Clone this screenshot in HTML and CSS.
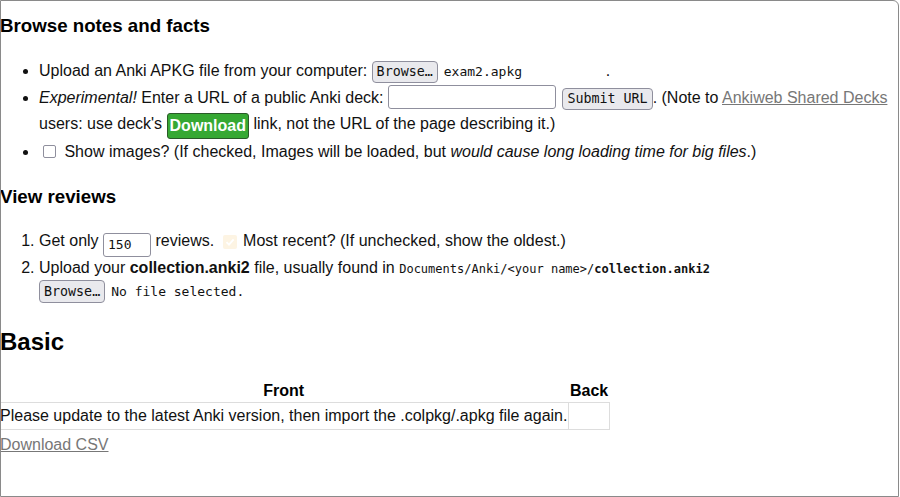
FILE: index.html
```html
<!DOCTYPE html>
<html>
<head>
<meta charset="utf-8">
<link rel="stylesheet" href="styles.css">
</head>
<body>
<div class="frame">
  <div class="content">
    <h3 class="h-browse">Browse notes and facts</h3>
    <ul class="list">
      <li>Upload an Anki APKG file from your computer: <span class="file"><span class="btn">Browse…</span><span class="fname">exam2.apkg</span></span>.</li>
      <li><em>Experimental!</em> Enter a URL of a public Anki deck: <span class="text-input"></span> <span class="btn">Submit URL</span>. (Note to <a class="link" href="#">Ankiweb Shared Decks</a> users: use deck's <span class="dl">Download</span> link, not the URL of the page describing it.)</li>
      <li><span class="cb"></span> Show images? (If checked, Images will be loaded, but <em>would cause long loading time for big files</em>.)</li>
    </ul>
    <h3 class="h-reviews">View reviews</h3>
    <ol class="list olist">
      <li>Get only <span class="num-input">150</span> reviews. <span class="cb-checked"><svg width="10" height="10" viewBox="0 0 10 10"><path d="M1.5 5.2 L4 7.6 L8.6 2.4" fill="none" stroke="#fff" stroke-width="1.8"/></svg></span> Most recent? (If unchecked, show the oldest.)</li>
      <li>Upload your <b>collection.anki2</b> file, usually found in <code>Documents/Anki/&lt;your name&gt;/<b>collection.anki2</b></code><br><span class="file"><span class="btn btn-tall">Browse…</span><span class="fname2">No file selected.</span></span></li>
    </ol>
    <h2 class="h-basic">Basic</h2>
    <table class="cards">
      <thead>
        <tr><th>Front</th><th>Back</th></tr>
      </thead>
      <tbody>
        <tr><td>Please update to the latest Anki version, then import the .colpkg/.apkg file again.</td><td></td></tr>
      </tbody>
    </table>
    <a class="link csv" href="#">Download CSV</a>
  </div>
</div>
</body>
</html>
```
FILE: styles.css
```css
html, body {
  margin: 0;
  padding: 0;
  background: #fff;
}
.frame {
  box-sizing: border-box;
  width: 899px;
  height: 497px;
  border: 1px solid #8a8a8a;
  border-top-right-radius: 6px;
  overflow: hidden;
  font-family: "Liberation Sans", Arial, sans-serif;
  font-size: 16px;
  color: #111;
  line-height: 1.5;
}
.content {
  margin-left: -1px;
}
h3 {
  font-size: 18.72px;
  font-weight: bold;
  color: #000;
  margin: 0;
}
.h-browse { margin-top: 11px; }
.h-reviews { margin-top: 18px; }
h2 {
  font-size: 24px;
  font-weight: bold;
  color: #000;
  margin: 21px 0 0 0;
}
.list {
  margin: 18px 0 0 0;
  padding-left: 39px;
}
.list li {
  line-height: 26px;
}
.olist {
  margin-top: 19px;
}
.olist li {
  line-height: 22px;
}
.btn {
  display: inline-block;
  box-sizing: border-box;
  font-family: "DejaVu Sans Mono", monospace;
  font-size: 13.33px;
  line-height: 20px;
  padding: 0 4px;
  background: #e9e9ed;
  border: 1px solid #8f8f9d;
  border-radius: 4px;
  color: #111;
  vertical-align: baseline;
}
.btn-tall { line-height: 21px; }
.file .btn { margin-right: 6px; }
.fname {
  display: inline-block;
  width: 162px;
  font-family: "DejaVu Sans Mono", monospace;
  font-size: 13px;
}
.fname2 {
  font-family: "DejaVu Sans Mono", monospace;
  font-size: 13px;
}
.text-input {
  display: inline-block;
  box-sizing: border-box;
  width: 168px;
  height: 24px;
  border: 1px solid #8f8f9d;
  border-radius: 3px;
  vertical-align: -6px;
}
.text-input + .btn { margin-left: 2px; }
.num-input {
  display: inline-block;
  box-sizing: border-box;
  width: 48px;
  height: 24px;
  border: 1px solid #8f8f9d;
  border-radius: 3px;
  padding-left: 4px;
  font-family: "DejaVu Sans Mono", monospace;
  font-size: 13px;
  line-height: 22px;
  vertical-align: -3px;
}
.link {
  color: #777;
  text-decoration: underline;
}
.dl {
  display: inline-block;
  box-sizing: border-box;
  background: #36a833;
  color: #fff;
  font-weight: bold;
  border: 1px solid #2a5a28;
  border-radius: 3px;
  padding: 0 2px;
  line-height: 24px;
  vertical-align: -2px;
}
.cb {
  display: inline-block;
  box-sizing: border-box;
  width: 13px;
  height: 13px;
  border: 1px solid #8f8f9d;
  border-radius: 2px;
  margin-left: 4px;
  margin-right: 4px;
  vertical-align: -1px;
}
.cb-checked {
  display: inline-block;
  width: 14px;
  height: 14px;
  background: #fdf4e3;
  border-radius: 2px;
  margin-left: 4px;
  margin-right: 2px;
  vertical-align: -1px;
  text-align: center;
  line-height: 14px;
}
.cb-checked svg { vertical-align: top; margin-top: 2px; }
code {
  font-family: "DejaVu Sans Mono", monospace;
  font-size: 12px;
}
.cards {
  border-collapse: collapse;
  margin-top: 21px;
  margin-left: -2px;
}
.cards th {
  font-weight: bold;
  color: #000;
  padding: 0 1px 1px 1px;
  line-height: 20px;
}
.cards td {
  border: 1px solid #ddd;
  padding: 1px;
  line-height: 24px;
}
.csv {
  display: inline-block;
  margin-top: 3px;
}
```
